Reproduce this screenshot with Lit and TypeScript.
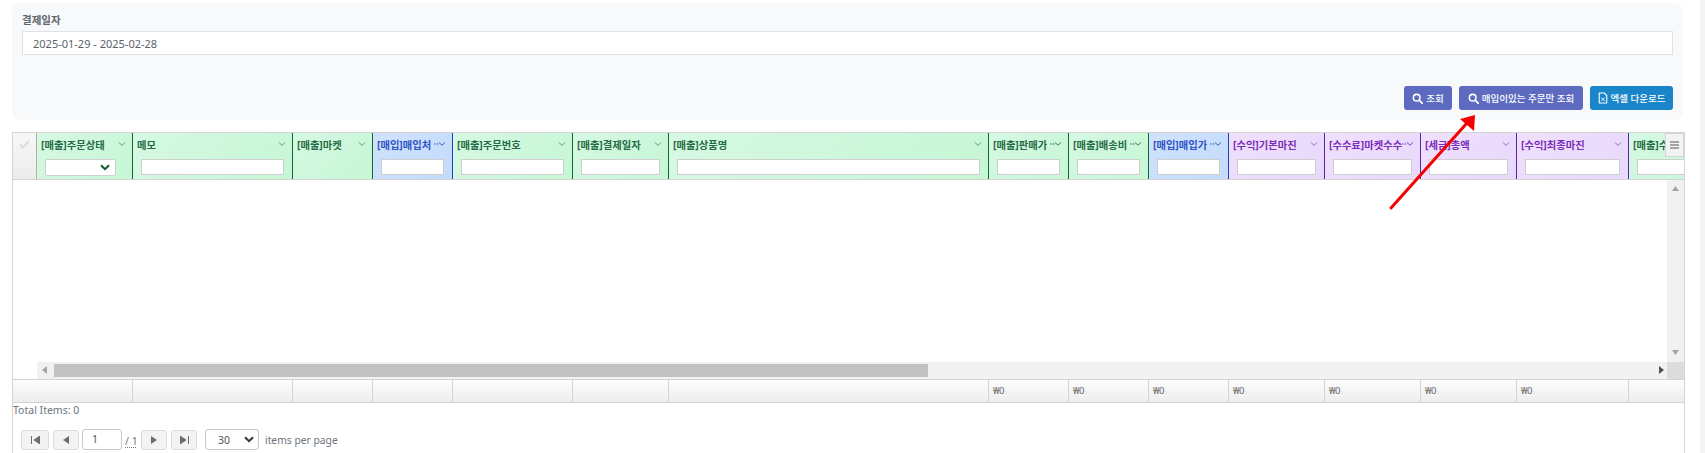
import { LitElement, html, css, svg } from "lit";
import { customElement } from "lit/decorators.js";

type Col = { t: string; w: number; k: "g" | "b" | "p"; f?: "i" | "s" | "n"; dots?: boolean };
const cols: Col[] = [
  { t: "[매출]주문상태", w: 96, k: "g", f: "s" },
  { t: "메모", w: 160, k: "g" },
  { t: "[매출]마켓", w: 80, k: "g", f: "n" },
  { t: "[매입]매입처", w: 80, k: "b", dots: true },
  { t: "[매출]주문번호", w: 120, k: "g" },
  { t: "[매출]결제일자", w: 96, k: "g" },
  { t: "[매출]상품명", w: 320, k: "g" },
  { t: "[매출]판매가", w: 80, k: "g", dots: true },
  { t: "[매출]배송비", w: 80, k: "g", dots: true },
  { t: "[매입]매입가", w: 80, k: "b", dots: true },
  { t: "[수익]기본마진", w: 96, k: "p" },
  { t: "[수수료]마켓수수", w: 96, k: "p", dots: true },
  { t: "[세금]총액", w: 96, k: "p" },
  { t: "[수익]최종마진", w: 112, k: "p" },
  { t: "[매출]수수료", w: 96, k: "g" },
];
const search = html`<svg class="ic" viewBox="0 0 16 16" width="11" height="11"><circle cx="6.8" cy="6.8" r="4.8" fill="none" stroke="currentColor" stroke-width="2.2"/><path d="M10.5 10.5L15 15" stroke="currentColor" stroke-width="2.6" stroke-linecap="round"/></svg>`;
const chev = svg`<path d="M1 1.5L4 4.5L7 1.5" fill="none" stroke="currentColor" stroke-width="0.9" opacity="0.75"/>`;

@customElement("app-root")
export class AppRoot extends LitElement {
  static styles = css`
    :host { display: block; height: 453px; overflow: hidden; position: relative; background: #fff;
      font-family: "Noto Sans", "Noto Sans CJK KR", sans-serif; color: #6c757d; }
    .page { width: 1700px; padding: 3px 0 0 12px; box-sizing: border-box; }
    .strip { position: absolute; right: 0; top: 0; bottom: 0; width: 5px; background: #f5f5f5; }
    .panel { width: 1671px; height: 117px; box-sizing: border-box; background: #f8f9fa; border-radius: 8px;
      padding: 9px 10px 0 10px; display: flex; flex-direction: column; }
    .lbl { font-size: 10.5px; font-weight: 700; color: #5f666d; line-height: 16px; height: 19px; }
    .date { height: 24px; box-sizing: border-box; border: 1px solid #dee2e6; background: #fff; padding: 0 10px;
      font-size: 11px; line-height: 23px; color: #5a6268; }
    .btns { display: flex; justify-content: flex-end; gap: 7px; margin-top: 31px; }
    .btn { height: 24px; border-radius: 3px; color: #fff; font-size: 9.5px; font-weight: 500; display: flex; align-items: center;
      justify-content: center; gap: 3px; background: #5c6bc0; box-sizing: border-box; }
    .b1 { width: 48px; } .b2 { width: 124px; } .b3 { width: 83px; background: #1a85c9; }
    .grid { margin-top: 12px; width: 1673px; height: 321px; box-sizing: border-box; border: 1px solid #d4d4d4; border-bottom: 0;
      position: relative; display: flex; flex-direction: column; }
    .hdr { height: 46px; display: flex; overflow: hidden; border-bottom: 1px solid #d4d4d4; box-sizing: content-box; flex: none; }
    .chk { width: 24px; flex: none; box-sizing: border-box; background: linear-gradient(#f7f7f7, #ececec); border-right: 1px solid #b0b0b0;
      display: flex; justify-content: center; padding-top: 7px; }
    .col { flex: none; box-sizing: border-box; border-right: 1px solid; position: relative; font-size: 10.3px; font-weight: 700; }
    .g { background: linear-gradient(135deg, #d6f9e3, #c6f6d5); color: #256b45; border-right-color: #0d6b30; }
    .b { background: linear-gradient(135deg, #cfe2fd, #c3dbfc); color: #2f52c4; border-right-color: #1d3fc4; }
    .p { background: linear-gradient(135deg, #efe0fd, #e8d8fb); color: #7b2cb8; border-right-color: #5a20b0; }
    .t { position: absolute; left: 4px; top: 2px; right: 3px; height: 18px; display: flex; justify-content: space-between; align-items: center; white-space: nowrap; overflow: hidden; }
    .t span { overflow: hidden; }
    .t svg { flex: none; margin-right: 3px; }
    .f { position: absolute; left: 8px; right: 8px; top: 26px; height: 16px; box-sizing: border-box; background: #fff; border: 1px solid #cfcfcf; }
    .sel { right: 16px; border-radius: 2px; height: 17px; color: #0d5c2c; display: flex; justify-content: flex-end; align-items: center; padding-right: 5px; }
    .menu { position: absolute; right: 0; top: 0; width: 19px; height: 24px; box-sizing: border-box; background: #f3f3f3; border: 1px solid #d4d4d4; color: #555; display: flex; align-items: center; justify-content: center; }
    .body { flex: none; height: 199px; position: relative; }
    .vs { position: absolute; right: 0; top: 0; bottom: 0; width: 17px; background: #f1f1f1; color: #a3a3a3; }
    .vs .up { position: absolute; top: 6px; left: 5px; }
    .vs .dn { position: absolute; bottom: 24px; left: 5px; }
    .hs { position: absolute; left: 24px; right: 0; bottom: 0; height: 17px; background: #f1f1f1; }
    .thumb { position: absolute; left: 17px; top: 2px; width: 874px; height: 13px; background: #c1c1c1; }
    .hs .l { position: absolute; left: 5px; top: 4px; color: #a3a3a3; }
    .hs .r { position: absolute; right: 20px; top: 4px; color: #505050; }
    .corner { position: absolute; right: 0; top: 0; bottom: 0; width: 17px; background: #dcdcdc; }
    .foot { display: flex; flex: none; overflow: hidden; border-top: 1px solid #d4d4d4; border-bottom: 1px solid #d4d4d4; background: linear-gradient(#fdfdfd, #ededed); box-sizing: border-box; height: 24px; }
    .fc { flex: none; box-sizing: border-box; border-right: 1px solid #d4d4d4; font-size: 9.5px; color: #666; line-height: 21px; padding-left: 4px; letter-spacing: -0.4px; }
    .total { font-size: 10.5px; color: #6c757d; line-height: 15px; height: 26px; box-sizing: border-box; }
    .pager { display: flex; align-items: center; padding-left: 8px; height: 21px; font-size: 10.5px; }
    .pb { height: 20px; box-sizing: border-box; border: 1px solid #dcdcdc; border-radius: 3px; background: #f3f3f3; color: #6c6c6c; display: flex; align-items: center; justify-content: center; }
    .inp { width: 40px; height: 21px; box-sizing: border-box; border: 1px solid #c8c8c8; border-radius: 3px; background: #fff; line-height: 19px; padding-left: 9px; color: #555; margin-left: 3px; font-size: 10.5px; }
    .of { margin: 0 3px 0 3px; width: 13px; text-decoration: underline dotted; text-underline-offset: 2px; white-space: nowrap; padding-top: 3px; color: #777; }
    .size { width: 54px; height: 21px; box-sizing: border-box; border: 1px solid #c8c8c8; border-radius: 3px; margin-left: 8px; margin-right: 6px; display: flex; align-items: center; justify-content: space-between; padding: 0 4px 0 12px; font-size: 10.5px; color: #555; }
    .ipp { font-size: 10.3px; }
    .arrow { position: absolute; left: 1380px; top: 100px; pointer-events: none; }
  `;

  render() {
    return html`
      <div class="page">
        <div class="panel">
          <div class="lbl">결제일자</div>
          <div class="date">2025-01-29 - 2025-02-28</div>
          <div class="btns">
            <div class="btn b1">${search}조회</div>
            <div class="btn b2">${search}매입이있는 주문만 조회</div>
            <div class="btn b3"><svg viewBox="0 0 12 14" width="10" height="12"><path d="M1.5 1h6l3 3v9h-9z" fill="none" stroke="currentColor" stroke-width="1.3"/><path d="M4 6.5l4 4M8 6.5l-4 4" stroke="currentColor" stroke-width="1.1"/></svg>엑셀 다운로드</div>
          </div>
        </div>
        <div class="grid">
          <div class="hdr">
            <div class="chk"><svg width="11" height="9" viewBox="0 0 11 9"><path d="M1 4.5L4 7.5L10 1" fill="none" stroke="#d8d8d8" stroke-width="1.6"/></svg></div>
            ${cols.map((c) => html`
              <div class="col ${c.k}" style="width:${c.w}px">
                <div class="t"><span>${c.t}</span>${c.dots
                  ? html`<svg width="12" height="6" viewBox="0 0 12 6"><path d="M5 1.5L8 4.2L11 1.5" fill="none" stroke="currentColor" stroke-width="0.9"/><circle cx="1" cy="3" r="0.7" fill="currentColor"/><circle cx="3.6" cy="3" r="0.7" fill="currentColor"/></svg>`
                  : html`<svg width="8" height="6" viewBox="0 0 8 6">${chev}</svg>`}</div>
                ${c.f === "n" ? "" : c.f === "s"
                  ? html`<div class="f sel"><svg width="10" height="7" viewBox="0 0 10 7"><path d="M1 1.2L5 5.2L9 1.2" fill="none" stroke="currentColor" stroke-width="2"/></svg></div>`
                  : html`<div class="f"></div>`}
              </div>`)}
          </div>
          <div class="menu"><svg width="9" height="8" viewBox="0 0 9 8"><path d="M0 1h9M0 4h9M0 7h9" stroke="currentColor" stroke-width="1"/></svg></div>
          <div class="body">
            <div class="vs">
              <svg class="up" width="7" height="5" viewBox="0 0 7 5"><path d="M3.5 0L7 5H0z" fill="currentColor"/></svg>
              <svg class="dn" width="7" height="5" viewBox="0 0 7 5"><path d="M0 0H7L3.5 5z" fill="currentColor"/></svg>
            </div>
            <div class="hs">
              <div class="thumb"></div>
              <svg class="l" width="5" height="8" viewBox="0 0 5 8"><path d="M5 0V8L0 4z" fill="currentColor"/></svg>
              <svg class="r" width="5" height="8" viewBox="0 0 5 8"><path d="M0 0V8L5 4z" fill="currentColor"/></svg>
              <div class="corner"></div>
            </div>
          </div>
          <div class="foot">
            <div class="fc" style="width:120px"></div>
            ${cols.slice(1).map((c, i) => html`<div class="fc" style="width:${c.w}px">${i >= 6 && i <= 12 ? "₩0" : ""}</div>`)}
          </div>
          <div class="total">Total Items: 0</div>
          <div class="pager">
            <div class="pb" style="width:28px"><svg width="9" height="8" viewBox="0 0 9 8"><path d="M0.5 0V8M9 0V8L3 4z" stroke="currentColor" fill="currentColor" stroke-width="1"/></svg></div>
            <div class="pb" style="width:26px;margin-left:4px"><svg width="6" height="8" viewBox="0 0 6 8"><path d="M6 0V8L0 4z" fill="currentColor"/></svg></div>
            <div class="inp">1</div>
            <div class="of">/ 1</div>
            <div class="pb" style="width:26px"><svg width="6" height="8" viewBox="0 0 6 8"><path d="M0 0V8L6 4z" fill="currentColor"/></svg></div>
            <div class="pb" style="width:26px;margin-left:4px"><svg width="9" height="8" viewBox="0 0 9 8"><path d="M8.5 0V8M0 0V8L6 4z" stroke="currentColor" fill="currentColor" stroke-width="1"/></svg></div>
            <div class="size">30<svg width="10" height="7" viewBox="0 0 10 7"><path d="M1 1.2L5 5.2L9 1.2" fill="none" stroke="#333" stroke-width="2"/></svg></div>
            <span class="ipp">items per page</span>
          </div>
        </div>
      </div>
      <div class="strip"></div>
      <svg class="arrow" width="110" height="115" viewBox="0 0 110 115"><path d="M11 108L87 23" stroke="#f40000" stroke-width="3" stroke-linecap="round"/><path d="M95 15L80 19L94 31z" fill="#f40000"/></svg>
    `;
  }
}
